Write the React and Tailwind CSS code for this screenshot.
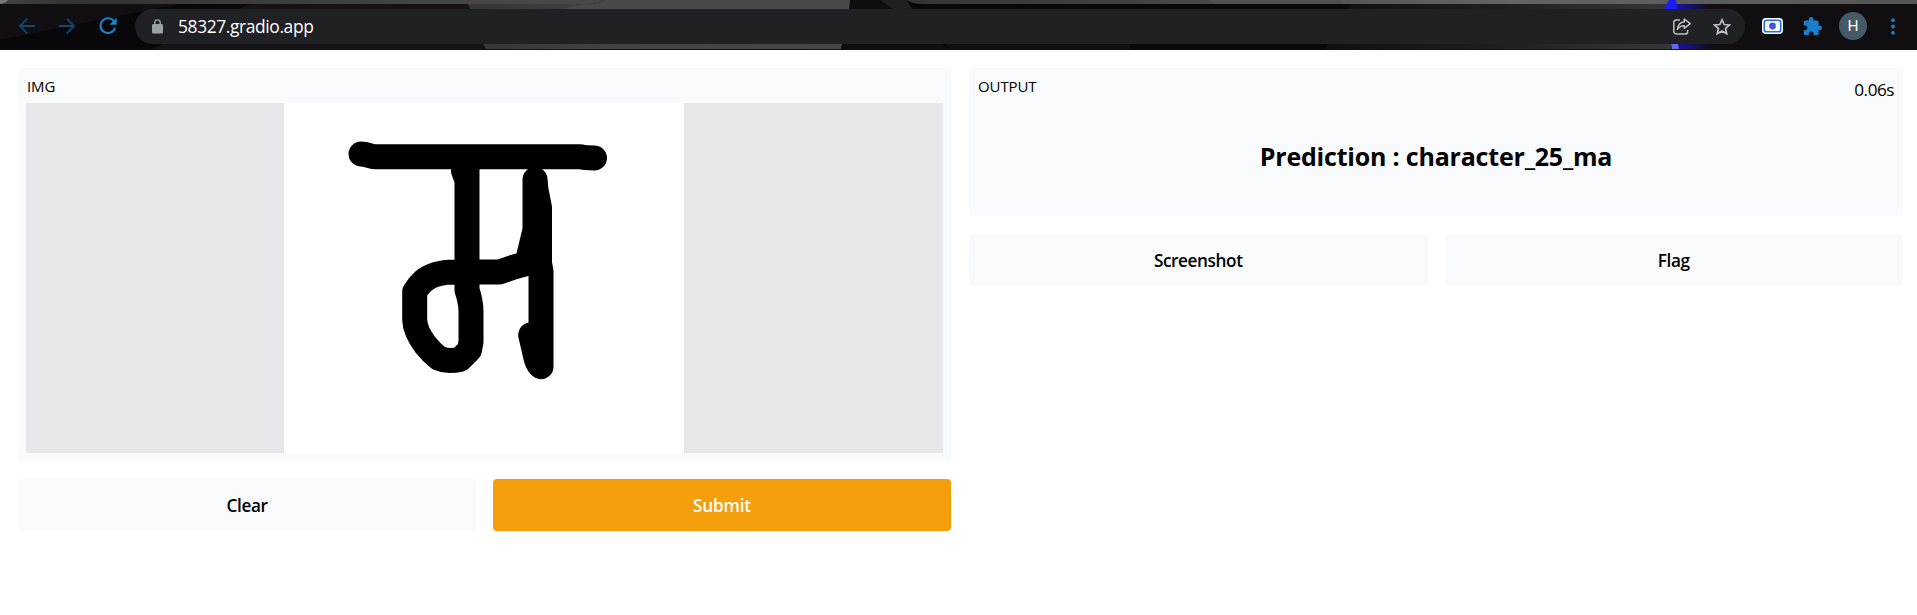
import React from "react";

function ToolbarBackdrop() {
  return (
    <svg className="absolute inset-0 h-full w-full" viewBox="0 0 1917 50" preserveAspectRatio="none" aria-hidden="true">
      <defs>
        <linearGradient id="strip" x1="0" x2="1">
          <stop offset="0" stopColor="#424242" />
          <stop offset="0.12" stopColor="#333335" />
          <stop offset="0.75" stopColor="#464646" />
          <stop offset="1" stopColor="#484848" />
        </linearGradient>
        <linearGradient id="mid" x1="0" x2="1">
          <stop offset="0" stopColor="#353538" />
          <stop offset="0.4" stopColor="#434343" />
          <stop offset="1" stopColor="#484848" />
        </linearGradient>
        <linearGradient id="tabs" x1="0" x2="1">
          <stop offset="0" stopColor="#343434" />
          <stop offset="0.3" stopColor="#484848" />
          <stop offset="0.6" stopColor="#646464" />
          <stop offset="1" stopColor="#555456" />
        </linearGradient>
        <linearGradient id="wall" x1="0" x2="1">
          <stop offset="0" stopColor="#101012" />
          <stop offset="0.5" stopColor="#1f1f22" />
          <stop offset="1" stopColor="#38383a" />
        </linearGradient>
        <linearGradient id="glow" x1="0" x2="1">
          <stop offset="0" stopColor="#1b14a8" />
          <stop offset="1" stopColor="#110e14" />
        </linearGradient>
      </defs>
      <rect width="1917" height="50" fill="#08070a" />
      <path d="M0 4H180L0 40Z" fill="#110f13" />
      <path d="M250 4H470L490 50H150Z" fill="#151317" />
      <path d="M468 4H849L841 50H486Z" fill="url(#mid)" />
      <path d="M849 0H880L950 50H841Z" fill="#0e0e10" />
      <path d="M880 0H907L912 9H893Z" fill="#202022" />
      <path d="M945 44H1130V50H952Z" fill="#101012" />
      <path d="M1350 4H1671L1678 50H1325Z" fill="url(#wall)" />
      <rect x="1671" y="4" width="246" height="46" fill="#110e12" />
      <path d="M1676 0H1710V50H1679Z" fill="url(#glow)" />
      <path d="M0 0H605Q598 4 588 4H0Z" fill="url(#strip)" />
      <path d="M605 0H850L849 9H560L588 4Q598 4 605 0Z" fill="#494949" />
      <path d="M0 0H8Q6 3 0 4Z" fill="#77777a" />
      <path d="M907 0H1917V4H923Q912 4 907 0Z" fill="url(#tabs)" />
      <path d="M1208 0L1216 4H1342V0Z" fill="#505050" />
      <path d="M1669 0H1676L1677 9H1664L1667 4Z" fill="#1a1dff" />
      <path d="M1671 43H1678L1679 50H1672Z" fill="#5b67f5" />
      <rect y="49" width="1917" height="1" fill="#0b1724" />
    </svg>
  );
}

function Arrow({ flip }) {
  return (
    <svg className={flip ? "h-4 w-4 -scale-x-100" : "h-4 w-4"} viewBox="0 0 16 16" fill="none" stroke="#12466f" strokeWidth="1.9">
      <path d="M16 8H1.5M8.2 .7L1 8l7.2 7.3" />
    </svg>
  );
}

function Reload() {
  return (
    <svg className="h-[18px] w-[18px]" viewBox="0 0 18 18">
      <path d="M15.2 4.6A7.4 7.4 0 1 0 16 11" fill="none" stroke="#1c82ca" strokeWidth="2.1" />
      <path d="M17.7.6v7.2h-7.2z" fill="#1c82ca" />
    </svg>
  );
}

function Lock() {
  return (
    <svg className="h-[15px] w-[11px]" viewBox="0 0 11 15">
      <rect y="5" width="11" height="9.5" rx="1.3" fill="#9aa0a6" />
      <path d="M2.8 5.5V3.6a2.7 2.7 0 0 1 5.4 0v1.9" fill="none" stroke="#9aa0a6" strokeWidth="1.4" />
    </svg>
  );
}

function Share() {
  return (
    <svg className="h-[17px] w-[18px]" viewBox="0 0 18 17" fill="none" stroke="#bdc1c6" strokeWidth="1.5" strokeLinejoin="round">
      <path d="M7 2H3.4A2.6 2.6 0 0 0 .8 4.600V13.400A2.600 2.600 0 0 0 3.400 16H12A2.600 2.600 0 0 0 14.600 13.400V12" />
      <path d="M11.300 1L17.200 5.700L11.300 10.400V7.800C8.300 7.700 6.200 8.900 4.500 11.300C4.900 7.300 7.200 4.200 11.300 3.700Z" />
    </svg>
  );
}

function Star() {
  return (
    <svg className="h-[17px] w-[18px]" viewBox="0 0 18 17" fill="none" stroke="#bdc1c6" strokeWidth="1.7">
      <path d="M9 1.800L11.200 6.500L16.500 7L12.500 10.500L13.700 15.700L9 12.900L4.300 15.700L5.500 10.500L1.500 7L6.800 6.500Z" />
    </svg>
  );
}

function Recorder() {
  return (
    <svg className="h-4 w-[21px]" viewBox="0 0 21 16">
      <rect width="21" height="16" rx="4" fill="#fff" />
      <rect x="2.300" y="2.200" width="16.400" height="11.600" rx="2.400" fill="#fff" stroke="#1f6fdc" strokeWidth="1.600" />
      <circle cx="10.500" cy="8" r="3.400" fill="#3457d9" />
      <circle cx="10.500" cy="8" r="1.500" fill="#5a4be0" />
    </svg>
  );
}

function Puzzle() {
  return (
    <svg className="h-[21px] w-[21px]" viewBox="0 0 24 24" fill="#1a7fcb">
      <path d="M20.500 11H19V7c0-1.100-.9-2-2-2h-4V3.500a2.500 2.500 0 0 0-5 0V5H4c-1.100 0-2 .9-2 2v3.800h1.500c1.500 0 2.700 1.200 2.700 2.700S5 16.200 3.500 16.200H2V20c0 1.100.9 2 2 2h3.800v-1.500c0-1.500 1.200-2.700 2.700-2.700s2.700 1.200 2.700 2.700V22H17c1.100 0 2-.9 2-2v-4h1.500a2.500 2.500 0 0 0 0-5z" />
    </svg>
  );
}

function Dots() {
  return (
    <svg className="h-[17px] w-1" viewBox="0 0 4 17" fill="#1a7fcb">
      <circle cx="2" cy="2.200" r="1.900" />
      <circle cx="2" cy="8.500" r="1.900" />
      <circle cx="2" cy="14.800" r="1.900" />
    </svg>
  );
}

function Toolbar() {
  return (
    <header className="relative h-[50px]">
      <ToolbarBackdrop />
      <div className="relative flex h-[52px] items-center pl-[19px]">
        <Arrow />
        <div className="ml-6 flex"><Arrow flip /></div>
        <div className="ml-6 flex"><Reload /></div>
        <div className="ml-[18px] mt-[1px] flex h-[35px] w-[1610px] items-center rounded-full bg-[#202124] pl-[17px] pr-[14px]">
          <Lock />
          <span className="ml-[15px] text-[17.4px] leading-none tracking-[-0.38px] text-white">58327.gradio.app</span>
          <div className="ml-auto flex gap-[22px]">
            <Share />
            <Star />
          </div>
        </div>
        <div className="ml-[17px] flex"><Recorder /></div>
        <div className="ml-[19px] flex"><Puzzle /></div>
        <div className="ml-4 flex h-7 w-7 items-center justify-center rounded-full bg-[#455a64] pt-px font-[Roboto] text-[15.500px] text-white">H</div>
        <div className="ml-[24px] flex"><Dots /></div>
      </div>
    </header>
  );
}

function Drawing() {
  return (
    <svg className="h-[350px] w-[400px] bg-white" viewBox="0 0 400 350" fill="none" stroke="#000" strokeWidth="25" strokeLinecap="round" strokeLinejoin="round">
      <path d="M77 51C83 51 86 53.700 91 53.700H296C301 55 305 55 310.500 55" />
      <path d="M179.500 68L183 77M183 64V187C185 193 187 200 187 208.700V238.700L185.500 247L176 256.500Q171 257.500 165.500 257.500T154.500 255Q147 249 141.500 242Q131 228 130.700 217V188.700Q134 183 139.500 178Q150 169 171 169H215.500L230 164L244.500 160V154L251 127V76.500L252 87L255.500 105V160L257 168.700V263.700Q254 262 252 255L246.700 232" />
    </svg>
  );
}

function Button({ children, primary }) {
  return (
    <button
      className={
        primary
          ? "h-[52px] flex-1 rounded bg-[#f59e0b] pt-px text-[17.2px] font-semibold tracking-[-0.2px] text-white"
          : "h-[52px] flex-1 rounded bg-[#f9fafb] pt-px text-[17.2px] font-semibold tracking-[-0.4px] text-black"
      }
    >
      {children}
    </button>
  );
}

export default function App() {
  return (
    <div className="h-[615px] overflow-hidden bg-white font-['Open_Sans',sans-serif] text-black">
      <Toolbar />
      <main className="flex gap-[18px] pl-[18px] pr-[14px] pt-[18px]">
        <section className="flex w-[933px] flex-col gap-[18px]">
          <div className="h-[393px] rounded bg-[#f9fafb] px-2 pt-2">
            <div className="h-[27px] pl-px text-[15px] leading-[21px] tracking-[-0.1px]">IMG</div>
            <div className="flex h-[350px] bg-[#e5e7eb] pl-[258px]">
              <Drawing />
            </div>
          </div>
          <div className="flex gap-[17px]">
            <Button>Clear</Button>
            <Button primary>Submit</Button>
          </div>
        </section>
        <section className="flex w-[934px] flex-col gap-[18px]">
          <div className="h-[148px] rounded bg-[#f9fafb] px-[9px] pt-2">
            <div className="flex h-[60px] justify-between">
              <div className="text-[15px] leading-[21px] tracking-[-0.1px]">OUTPUT</div>
              <div className="text-[17.2px] leading-[28px] tracking-[-0.5px]">0.06s</div>
            </div>
            <h2 className="text-center text-[25px] font-bold leading-[40px] tracking-[-0.2px]">Prediction : character_25_ma</h2>
          </div>
          <div className="flex gap-[17px]">
            <Button>Screenshot</Button>
            <Button>Flag</Button>
          </div>
        </section>
      </main>
    </div>
  );
}
